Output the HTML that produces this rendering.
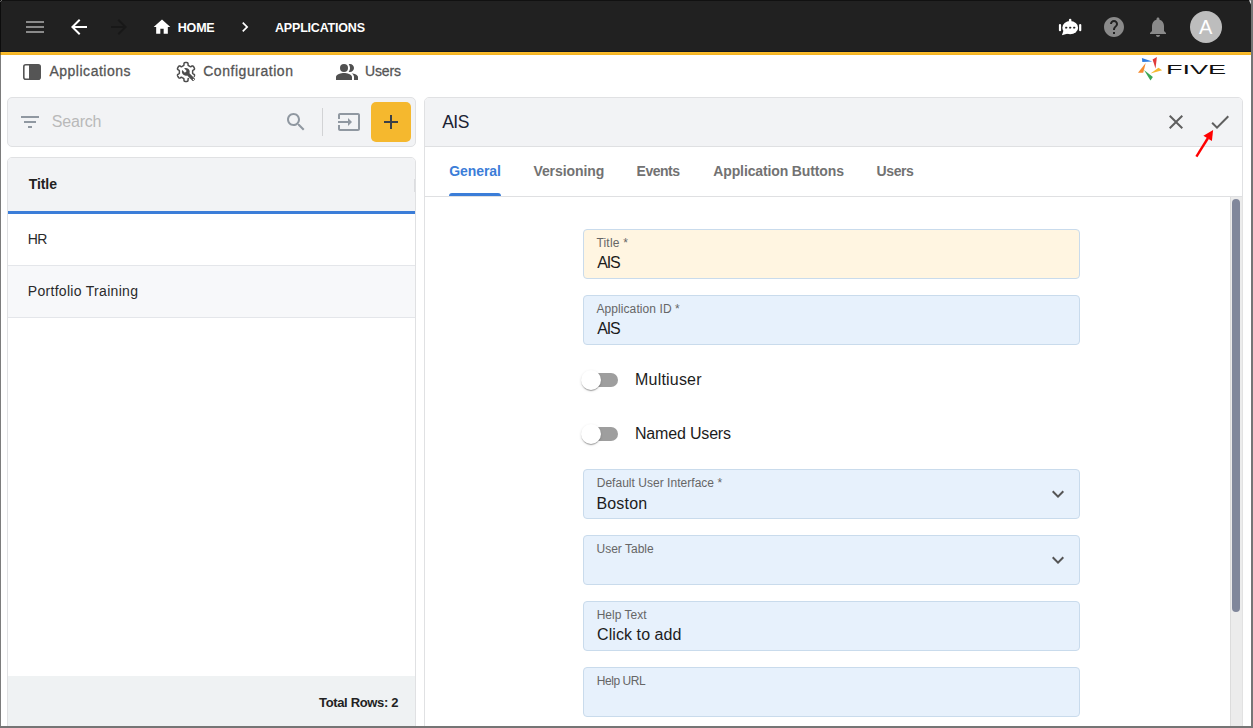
<!DOCTYPE html>
<html lang="en">
<head>
<meta charset="utf-8">
<title>Applications</title>
<style>
html,body{margin:0;padding:0;}
body{width:1253px;height:728px;overflow:hidden;background:#fff;font-family:"Liberation Sans",sans-serif;position:relative;color:#222;}
.abs{position:absolute;}
.t{position:absolute;white-space:nowrap;line-height:1;}
svg{position:absolute;display:block;}
#topbar{left:0;top:0;width:1253px;height:52px;background:#212121;}
#ybar{left:0;top:52px;width:1253px;height:3px;background:linear-gradient(#fdbf2f,#f1b122);}
#dline{left:0;top:51px;width:1253px;height:1px;background:#121821;}
.panel{position:absolute;box-sizing:border-box;border:1px solid #e0e1e3;border-radius:5px;background:#f2f3f5;}
.field{position:absolute;left:583px;width:497px;height:50px;box-sizing:border-box;border:1px solid #c9dbec;border-radius:4px;background:#e7f1fc;}
.lbl{font-size:12px;color:#666;left:596px;}
.val{font-size:16px;color:#1c1c1c;left:596px;}
.nav{font-size:15px;color:#555;-webkit-text-stroke:0.3px #555;}
.tab{font-size:14px;font-weight:bold;color:#727272;top:164px;}
.row{font-size:14px;color:#2a2a2a;left:28px;}
</style>
</head>
<body>
<!-- top bar -->
<div id="topbar" class="abs"></div>
<div id="ybar" class="abs"></div>
<div id="dline" class="abs"></div>

<!-- menu -->
<svg style="left:23px;top:15px" width="24" height="24" viewBox="0 0 24 24"><path fill="#8a8a8a" d="M3 18h18v-2H3v2zm0-5h18v-2H3v2zm0-7v2h18V6H3z"/></svg>
<!-- back -->
<svg style="left:67px;top:15px" width="24" height="24" viewBox="0 0 24 24"><path fill="#fff" d="M20 11H7.83l5.59-5.59L12 4l-8 8 8 8 1.41-1.41L7.83 13H20v-2z"/></svg>
<!-- forward disabled -->
<svg style="left:107px;top:15px" width="24" height="24" viewBox="0 0 24 24"><path fill="#181818" d="M12 4l-1.41 1.41L16.17 11H4v2h12.17l-5.58 5.59L12 20l8-8z"/></svg>
<!-- home -->
<svg style="left:152px;top:17px" width="20" height="20" viewBox="0 0 24 24"><path fill="#fff" d="M10 20v-6h4v6h5v-8h3L12 3 2 12h3v8z"/></svg>
<span class="t" id="home" style="left:177.8px;top:21.5px;font-size:12.5px;font-weight:bold;color:#fff;letter-spacing:-0.2px;">HOME</span>
<svg style="left:235px;top:17px" width="20" height="20" viewBox="0 0 24 24"><path fill="#fff" d="M10 6L8.59 7.41 13.17 12l-4.58 4.59L10 18l6-6z"/></svg>
<span class="t" id="apps" style="left:275px;top:21.5px;font-size:12.5px;font-weight:bold;color:#fff;letter-spacing:-0.19px;">APPLICATIONS</span>

<!-- right icons -->
<svg style="left:1058px;top:15px" width="24" height="24" viewBox="0 0 24 24">
 <g fill="#fff">
  <rect x="10.900" y="3.800" width="2.500" height="4" rx="1.200"/>
  <ellipse cx="12.200" cy="12.700" rx="7.900" ry="6.600"/>
  <path d="M5.600 15.200L3.900 20.300 10 18.600z"/>
  <rect x="0.900" y="9" width="2.200" height="7.300" rx="1.100"/>
  <rect x="21.100" y="9" width="2.200" height="7.300" rx="1.100"/>
 </g>
 <g fill="#212121"><rect x="7.200" y="11.800" width="1.900" height="1.800" rx=".4"/><rect x="11.200" y="11.800" width="1.900" height="1.800" rx=".4"/><rect x="15.200" y="11.800" width="1.900" height="1.800" rx=".4"/></g>
</svg>
<svg style="left:1102px;top:15px" width="24" height="24" viewBox="0 0 24 24"><path fill="#8a8a8a" d="M12 2C6.480 2 2 6.480 2 12s4.480 10 10 10 10-4.480 10-10S17.520 2 12 2zm1 17h-2v-2h2v2zm2.070-7.750l-.9.920C13.450 12.900 13 13.500 13 15h-2v-.5c0-1.100.450-2.100 1.170-2.830l1.240-1.260c.370-.360.590-.860.590-1.410 0-1.100-.9-2-2-2s-2 .9-2 2H8c0-2.210 1.790-4 4-4s4 1.790 4 4c0 .880-.360 1.680-.930 2.250z"/></svg>
<svg style="left:1146px;top:15px" width="24" height="24" viewBox="0 0 24 24"><path fill="#8a8a8a" d="M12 22c1.100 0 2-.9 2-2h-4c0 1.100.890 2 2 2zm6-6v-5c0-3.070-1.640-5.640-4.500-6.320V4c0-.830-.670-1.500-1.500-1.500s-1.500.670-1.500 1.500v.680C7.630 5.360 6 7.920 6 11v5l-2 2v1h16v-1l-2-2z"/></svg>
<div class="abs" style="left:1190px;top:11px;width:32px;height:32px;border-radius:50%;background:#bdbdbd;"></div>
<span class="t" id="avA" style="left:1199px;top:17px;font-size:20px;color:#fff;">A</span>

<!-- second nav -->
<svg style="left:20px;top:60px" width="24" height="24" viewBox="0 0 24 24"><rect x="3.800" y="4.800" width="16.400" height="14.400" rx="2" fill="#fff" stroke="#555" stroke-width="1.600"/><path fill="#555" d="M9 4.800h9.200a2 2 0 0 1 2 2v10.400a2 2 0 0 1-2 2H9z"/></svg>
<span class="t nav" id="n1" style="left:49.4px;top:64px;font-size:14px;letter-spacing:0.52px;">Applications</span>
<svg style="left:174px;top:60px" width="24" height="24" viewBox="0 0 24 24">
 <path fill="none" stroke="#4d4d4d" stroke-width="1.5" stroke-linejoin="round" d="M18.64 12.00 L18.64 11.76 L18.63 11.52 L18.61 11.28 L18.60 11.04 L18.61 10.80 L18.75 10.52 L19.24 10.14 L20.02 9.63 L20.47 9.16 L20.55 8.79 L20.48 8.47 L20.37 8.16 L20.24 7.86 L20.09 7.56 L19.94 7.28 L19.77 6.99 L19.60 6.72 L19.41 6.45 L19.21 6.20 L18.97 5.97 L18.62 5.85 L18.01 6.02 L17.18 6.47 L16.62 6.71 L16.32 6.70 L16.10 6.59 L15.91 6.45 L15.72 6.32 L15.52 6.19 L15.32 6.07 L15.12 5.95 L14.91 5.84 L14.71 5.74 L14.50 5.63 L14.30 5.49 L14.13 5.23 L14.06 4.60 L14.02 3.65 L13.85 3.02 L13.58 2.77 L13.27 2.66 L12.96 2.61 L12.64 2.57 L12.32 2.56 L12.00 2.55 L11.68 2.56 L11.36 2.57 L11.04 2.61 L10.73 2.66 L10.42 2.77 L10.15 3.02 L9.98 3.65 L9.94 4.60 L9.87 5.23 L9.70 5.49 L9.50 5.63 L9.29 5.74 L9.09 5.84 L8.88 5.95 L8.68 6.07 L8.48 6.19 L8.28 6.32 L8.09 6.45 L7.90 6.59 L7.68 6.70 L7.38 6.71 L6.82 6.47 L5.99 6.02 L5.38 5.85 L5.03 5.97 L4.79 6.20 L4.59 6.45 L4.40 6.72 L4.23 6.99 L4.06 7.28 L3.91 7.56 L3.76 7.86 L3.63 8.16 L3.52 8.47 L3.45 8.79 L3.53 9.16 L3.98 9.63 L4.76 10.14 L5.25 10.52 L5.39 10.80 L5.40 11.04 L5.39 11.28 L5.37 11.52 L5.36 11.76 L5.36 12.00 L5.36 12.24 L5.37 12.48 L5.39 12.72 L5.40 12.96 L5.39 13.20 L5.25 13.48 L4.76 13.86 L3.98 14.37 L3.53 14.84 L3.45 15.21 L3.52 15.53 L3.63 15.84 L3.76 16.14 L3.91 16.44 L4.06 16.73 L4.23 17.01 L4.40 17.28 L4.59 17.55 L4.79 17.80 L5.03 18.03 L5.38 18.15 L5.99 17.98 L6.82 17.53 L7.38 17.29 L7.68 17.30 L7.90 17.41 L8.09 17.55 L8.28 17.68 L8.48 17.81 L8.68 17.93 L8.88 18.05 L9.09 18.16 L9.29 18.26 L9.50 18.37 L9.70 18.51 L9.87 18.77 L9.94 19.40 L9.98 20.35 L10.15 20.98 L10.42 21.23 L10.73 21.34 L11.04 21.39 L11.36 21.43 L11.68 21.44 L12.00 21.45 L12.32 21.44 L12.64 21.43 L12.96 21.39 L13.27 21.34 L13.58 21.23 L13.85 20.98 L14.02 20.35 L14.06 19.40 L14.13 18.77 L14.30 18.51 L14.50 18.37 L14.71 18.26 L14.91 18.16 L15.12 18.05 L15.32 17.93 L15.52 17.81 L15.72 17.68 L15.91 17.55 L16.10 17.41 L16.32 17.30 L16.62 17.29 L17.18 17.53 L18.01 17.98 L18.62 18.15 L18.97 18.03 L19.21 17.80 L19.41 17.55 L19.60 17.28 L19.77 17.01 L19.94 16.73 L20.09 16.44 L20.24 16.14 L20.37 15.84 L20.48 15.53 L20.55 15.21 L20.47 14.84 L20.02 14.37 L19.24 13.86 L18.75 13.48 L18.61 13.20 L18.60 12.96 L18.61 12.72 L18.63 12.48 L18.64 12.24Z"/>
 <g transform="translate(7.3 7.3) scale(0.6)"><path fill="#4d4d4d" stroke="#fff" stroke-width="2.2" paint-order="stroke" d="M22.7 19l-9.1-9.1c.9-2.3.4-5-1.500-6.900-2-2-5-2.400-7.400-1.300L9 6 6 9 1.600 4.700C.4 7.100.9 10.100 2.900 12.100c1.900 1.900 4.600 2.400 6.900 1.500l9.100 9.100c.4.400 1 .400 1.400 0l2.300-2.300c.5-.4.5-1.100.100-1.400z"/><circle cx="20.300" cy="20.300" r="1.100" fill="#fff"/></g>
</svg>
<span class="t nav" id="n2" style="left:203.2px;top:64px;font-size:14px;letter-spacing:0.54px;">Configuration</span>
<svg style="left:335px;top:60px" width="24" height="24" viewBox="0 0 24 24"><g fill="#505050"><path d="M16.670 13.130C18.040 14.060 19 15.320 19 17v3h4v-3c0-2.180-3.570-3.470-6.330-3.870z"/><circle cx="9" cy="8" r="4"/><path d="M15 12c2.210 0 4-1.790 4-4s-1.790-4-4-4c-.470 0-.910.100-1.330.240C14.500 5.270 15 6.580 15 8s-.5 2.730-1.330 3.760c.420.140.860.240 1.330.240zM9 13c-2.670 0-8 1.340-8 4v3h16v-3c0-2.660-5.330-4-8-4z"/></g></svg>
<span class="t nav" id="n3" style="left:365px;top:64px;font-size:14px;letter-spacing:-0.12px;">Users</span>

<!-- FIVE logo -->
<svg style="left:1130px;top:52px" width="110" height="40" viewBox="1130 52 110 40">
 <polygon fill="#2f7de1" points="1141.900,58 1152.200,61.600 1142.300,61.900"/>
 <polygon fill="#e03a3a" points="1156.900,57 1152.600,59.500 1155.500,68.400"/>
 <polygon fill="#f5b82e" points="1158.500,67.700 1162.100,70.300 1150.500,73.600"/>
 <polygon fill="#3aa856" points="1144,70.100 1152.900,77 1150.500,80.600"/>
 <polygon fill="#f58a2e" points="1145.700,63.100 1143.200,72.700 1138,72.700"/>
 <text id="five" x="1165.900" y="73.700" font-family="Liberation Sans, sans-serif" font-size="13.600" fill="#111" textLength="60.300" lengthAdjust="spacingAndGlyphs">FIVE</text>
</svg>

<!-- search panel -->
<div class="panel" style="left:7px;top:97px;width:409px;height:50px;"></div>
<svg style="left:18px;top:110px" width="24" height="24" viewBox="0 0 24 24"><path fill="#9098a1" d="M10 18h4v-2h-4v2zM3 6v2h18V6H3zm3 7h12v-2H6v2z"/></svg>
<span class="t" id="search" style="left:51.8px;top:113.5px;font-size:16px;color:#b9b9b9;letter-spacing:-0.2px;">Search</span>
<svg style="left:284px;top:110px" width="24" height="24" viewBox="0 0 24 24"><path fill="#9098a1" d="M15.500 14h-.790l-.280-.270C15.410 12.590 16 11.110 16 9.500 16 5.910 13.090 3 9.500 3S3 5.910 3 9.500 5.910 16 9.500 16c1.610 0 3.090-.590 4.230-1.570l.270.280v.790l5 4.990L20.490 19l-4.990-5zm-6 0C7.010 14 5 11.990 5 9.500S7.010 5 9.500 5 14 7.010 14 9.500 11.990 14 9.500 14z"/></svg>
<div class="abs" style="left:322px;top:108px;width:1px;height:28px;background:#d2d3d5;"></div>
<svg style="left:337px;top:110px" width="24" height="24" viewBox="0 0 24 24"><path fill="#9098a1" d="M21 3.010H3c-1.100 0-2 .9-2 2V9h2V4.990h18v14.030H3V15H1v4.010c0 1.100.9 1.980 2 1.980h18c1.100 0 2-.880 2-1.980v-14c0-1.110-.9-2-2-2zM11 16l4-4-4-4v3H1v2h10v3z"/></svg>
<div class="abs" style="left:371px;top:102px;width:40px;height:40px;border-radius:5px;background:#f5b82e;"></div>
<svg style="left:379px;top:110px" width="24" height="24" viewBox="0 0 24 24"><path fill="#3a3f47" d="M19 13h-6v6h-2v-6H5v-2h6V5h2v6h6v2z"/></svg>

<!-- list panel -->
<div class="panel" style="left:7px;top:157px;width:409px;height:580px;background:#fff;overflow:hidden;">
  <div class="abs" style="left:0;top:0;width:407px;height:53px;background:#f2f3f5;"></div>
  <div class="abs" style="left:0;top:53px;width:407px;height:3px;background:#3b7dd8;"></div>
  <div class="abs" style="left:0;top:107px;width:407px;height:1px;background:#e4e6ea;"></div>
  <div class="abs" style="left:0;top:108px;width:407px;height:51px;background:#f7f8fa;"></div>
  <div class="abs" style="left:0;top:159px;width:407px;height:1px;background:#e4e6ea;"></div>
  <div class="abs" style="left:406px;top:21px;width:2px;height:13px;background:#dcdde0;"></div>
  <div class="abs" style="left:0;top:518px;width:407px;height:60px;background:#eff2f3;"></div>
</div>
<span class="t" id="title" style="left:28.8px;top:177px;font-size:14px;font-weight:bold;color:#222;letter-spacing:-0.1px;">Title</span>
<span class="t row" id="r1" style="top:232px;letter-spacing:-0.6px;left:27.8px;">HR</span>
<span class="t row" id="r2" style="top:284px;letter-spacing:0.3px;left:27.8px;">Portfolio Training</span>
<span class="t" id="total" style="left:319px;top:696px;font-size:13px;font-weight:bold;color:#222;letter-spacing:-0.34px;">Total Rows: 2</span>

<!-- right panel -->
<div class="panel" style="left:424px;top:97px;width:819px;height:640px;background:#fff;"></div>
<div class="abs" style="left:425px;top:98px;width:817px;height:48px;background:#f2f3f5;border-radius:4px 4px 0 0;"></div>
<div class="abs" style="left:425px;top:146px;width:817px;height:1px;background:#dfe0e2;"></div>
<div class="abs" style="left:425px;top:196px;width:817px;height:1px;background:#dfe0e2;"></div>
<span class="t" id="ais" style="left:442.2px;top:113.5px;font-size:17.5px;color:#1a2233;letter-spacing:-0.5px;">AIS</span>
<svg style="left:1164px;top:110px" width="24" height="24" viewBox="0 0 24 24"><path fill="#5f5f5f" d="M19 6.410L17.590 5 12 10.590 6.410 5 5 6.410 10.590 12 5 17.590 6.410 19 12 13.410 17.590 19 19 17.590 13.410 12z"/></svg>
<svg style="left:1208px;top:110px" width="24" height="24" viewBox="0 0 24 24"><path fill="#5f5f5f" d="M9 16.170L4.830 12l-1.420 1.410L9 19 21 7l-1.410-1.410z"/></svg>
<!-- red arrow -->
<svg style="left:1190px;top:125px" width="30" height="36" viewBox="1190 125 30 36"><line x1="1196.400" y1="156.600" x2="1208" y2="138" stroke="#f00" stroke-width="2.400"/><polygon fill="#f00" points="1213.100,130 1211.900,141 1203.400,135.800"/></svg>

<!-- tabs -->
<span class="t tab" id="tb1" style="left:449.2px;color:#3b7dd8;letter-spacing:-0.08px;">General</span>
<span class="t tab" id="tb2" style="left:533.4px;letter-spacing:-0.07px;">Versioning</span>
<span class="t tab" id="tb3" style="left:636.6px;letter-spacing:-0.5px;">Events</span>
<span class="t tab" id="tb4" style="left:713.3px;letter-spacing:-0.13px;">Application Buttons</span>
<span class="t tab" id="tb5" style="left:876.6px;letter-spacing:-0.42px;">Users</span>
<div class="abs" style="left:449px;top:193px;width:52px;height:3px;background:#3b7dd8;border-radius:3px 3px 0 0;"></div>

<!-- scrollbar -->
<div class="abs" style="left:1230px;top:197px;width:13px;height:531px;background:#ececec;border-left:1px solid #dcdcdc;border-right:1px solid #e2e2e2;box-sizing:border-box;"></div>
<div class="abs" style="left:1232px;top:199px;width:8px;height:413px;background:#80879b;border-radius:4px;"></div>

<!-- fields -->
<div class="field" style="top:229px;background:#fff5e1;"></div>
<span class="t lbl" id="l1" style="top:236.6px;letter-spacing:0.2px;left:596.4px;">Title *</span>
<span class="t val" id="v1" style="top:254.8px;font-size:16px;letter-spacing:-1.2px;left:597.2px;">AIS</span>

<div class="field" style="top:295px;"></div>
<span class="t lbl" id="l2" style="top:302.6px;letter-spacing:0.09px;left:596.4px;">Application ID *</span>
<span class="t val" id="v2" style="top:320.8px;font-size:16px;letter-spacing:-1.2px;left:597.2px;">AIS</span>

<!-- switches -->
<div class="abs" style="left:584px;top:373px;width:34px;height:14px;border-radius:7px;background:#9e9e9e;"></div>
<div class="abs" style="left:581px;top:370px;width:20px;height:20px;border-radius:50%;background:#fff;box-shadow:0 2px 1px -1px rgba(0,0,0,.2),0 1px 1px 0 rgba(0,0,0,.14),0 1px 3px 0 rgba(0,0,0,.12);"></div>
<span class="t val" id="s1" style="left:635px;top:372.2px;letter-spacing:0.2px;">Multiuser</span>
<div class="abs" style="left:584px;top:427px;width:34px;height:14px;border-radius:7px;background:#9e9e9e;"></div>
<div class="abs" style="left:581px;top:424px;width:20px;height:20px;border-radius:50%;background:#fff;box-shadow:0 2px 1px -1px rgba(0,0,0,.2),0 1px 1px 0 rgba(0,0,0,.14),0 1px 3px 0 rgba(0,0,0,.12);"></div>
<span class="t val" id="s2" style="left:635px;top:426px;letter-spacing:-0.18px;">Named Users</span>

<div class="field" style="top:469px;"></div>
<span class="t lbl" id="l3" style="top:476.6px;letter-spacing:0.03px;left:596.7px;">Default User Interface *</span>
<span class="t val" id="v3" style="top:495.5px;letter-spacing:0.18px;left:596.4px;">Boston</span>
<svg style="left:1046px;top:482px" width="24" height="24" viewBox="0 0 24 24"><path fill="#555" d="M16.590 8.590L12 13.170 7.410 8.590 6 10l6 6 6-6z"/></svg>

<div class="field" style="top:535px;"></div>
<span class="t lbl" id="l4" style="top:542.6px;left:596.5px;">User Table</span>
<svg style="left:1046px;top:548px" width="24" height="24" viewBox="0 0 24 24"><path fill="#555" d="M16.590 8.590L12 13.170 7.410 8.590 6 10l6 6 6-6z"/></svg>

<div class="field" style="top:601px;"></div>
<span class="t lbl" id="l5" style="top:608.6px;left:596.7px;">Help Text</span>
<span class="t val" id="v5" style="top:627.2px;letter-spacing:0.07px;left:597.1px;">Click to add</span>

<div class="field" style="top:667px;"></div>
<span class="t lbl" id="l6" style="top:674.6px;letter-spacing:-0.43px;left:596.7px;">Help URL</span>

<!-- window frame -->
<div class="abs" style="left:0;top:0;width:1253px;height:1px;background:#111;"></div>
<div class="abs" style="left:0;top:0;width:1px;height:52px;background:#0c0c0c;"></div>
<div class="abs" style="left:0;top:52px;width:1px;height:3px;background:#8a6a1c;"></div>
<div class="abs" style="left:0;top:55px;width:1px;height:673px;background:#7c7c7c;"></div>
<div class="abs" style="left:1px;top:0;width:1px;height:1px;background:#6c6c6c;"></div>
<div class="abs" style="left:0;top:1px;width:1px;height:1px;background:#5c5c5c;"></div>
<svg style="left:1247px;top:0" width="6" height="6" viewBox="0 0 6 6"><polygon fill="#e4e4e4" points="2,0.300 4,0.300 4,4.500"/></svg>
<div class="abs" style="left:1251px;top:0;width:2px;height:728px;background:#757575;"></div>
<div class="abs" style="left:0;top:726px;width:1253px;height:2px;background:#757575;"></div>
</body>
</html>
